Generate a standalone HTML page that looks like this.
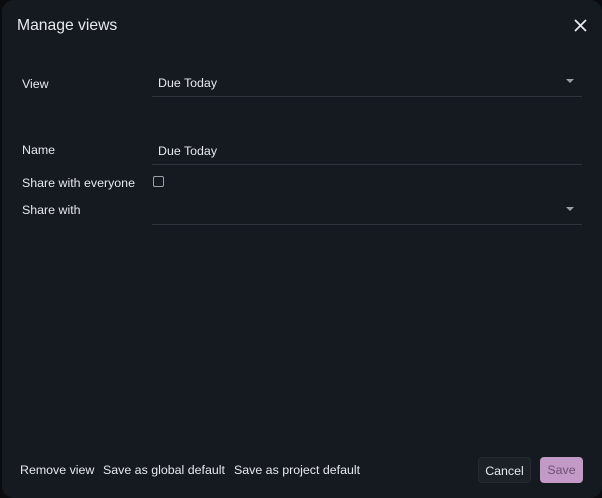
<!DOCTYPE html>
<html><head><style>
html,body{margin:0;padding:0;width:602px;height:498px;background:#0a0c0f;overflow:hidden}
body{font-family:"Liberation Sans",sans-serif;color:#e6e8eb}
.dlg{position:absolute;left:2px;top:0;width:600px;height:498px;background:#151a21;border-radius:12px}
.t{position:absolute;font-size:12.4px;white-space:nowrap}
.line{position:absolute;left:152px;width:430px;height:1px;background:#2e343c}
.caret{position:absolute;width:0;height:0;border-left:4px solid transparent;border-right:4px solid transparent;border-top:4px solid #9aa0a8}
</style></head><body>
<div class="dlg"></div>
<div class="t" style="left:17px;top:17px;font-size:15.7px;color:#e8eaed">Manage views</div>
<svg style="position:absolute;left:574px;top:19px" width="13" height="13" viewBox="0 0 13 13"><path d="M1 1L12 12M12 1L1 12" stroke="#e8eaed" stroke-width="1.8"/></svg>
<div class="t" style="left:22px;top:77px">View</div>
<div class="t" style="left:158px;top:76px">Due Today</div>
<div class="caret" style="left:566px;top:79px"></div>
<div class="line" style="top:96px"></div>
<div class="t" style="left:22px;top:143px">Name</div>
<div class="t" style="left:158px;top:144px">Due Today</div>
<div class="line" style="top:164px"></div>
<div class="t" style="left:22px;top:176px">Share with everyone</div>
<div style="position:absolute;left:153px;top:176px;width:9px;height:9px;border:1.5px solid #9aa0a8;border-radius:2px"></div>
<div class="t" style="left:22px;top:203px">Share with</div>
<div class="caret" style="left:566px;top:207px"></div>
<div class="line" style="top:224px"></div>
<div class="t" style="left:20px;top:463px">Remove view</div>
<div class="t" style="left:103px;top:463px">Save as global default</div>
<div class="t" style="left:234px;top:463px">Save as project default</div>
<div style="position:absolute;left:478px;top:457px;width:53px;height:26px;background:#1c2128;border:1px solid #262b32;border-radius:4px;box-sizing:border-box;font-size:12.4px;text-align:center;line-height:26px">Cancel</div>
<div style="position:absolute;left:540px;top:457px;width:43px;height:26px;background:#c399c7;border-radius:4px;font-size:12.4px;text-align:center;line-height:27px;color:#6e5273">Save</div>
</body></html>
